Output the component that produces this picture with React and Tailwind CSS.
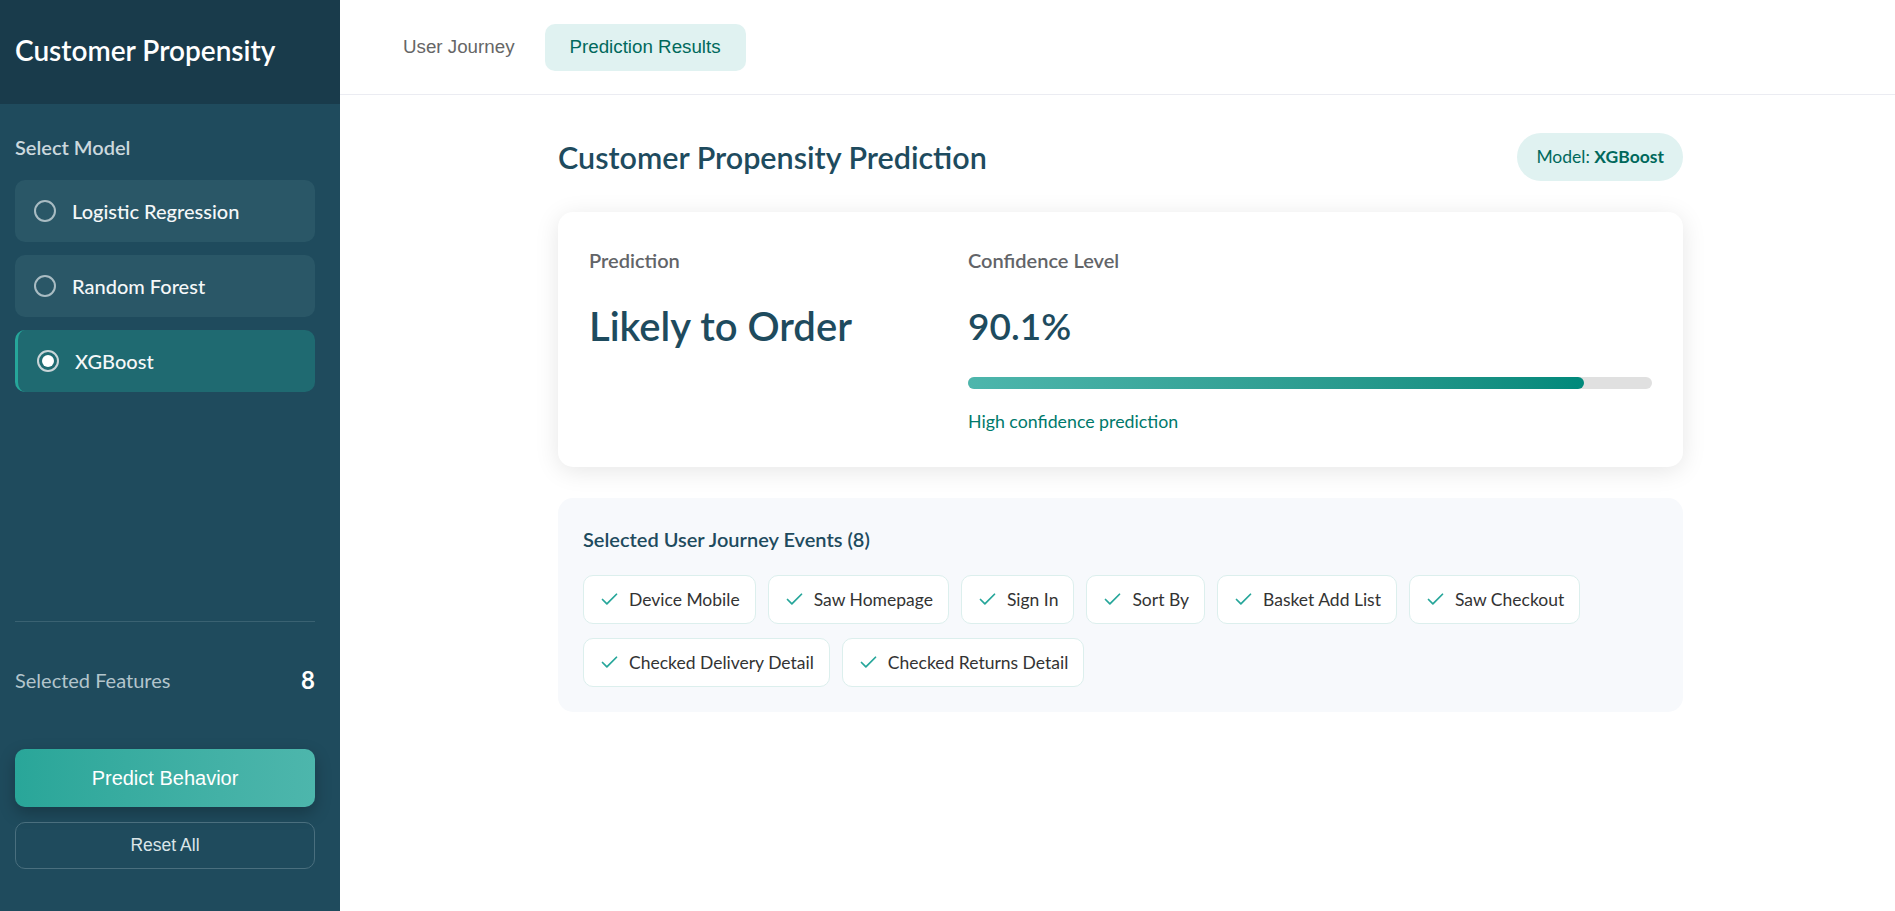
import { useState } from "react";
import { Check } from "lucide-react";

const MODELS = ["Logistic Regression", "Random Forest", "XGBoost"];

const EVENTS = [
  "Device Mobile",
  "Saw Homepage",
  "Sign In",
  "Sort By",
  "Basket Add List",
  "Saw Checkout",
  "Checked Delivery Detail",
  "Checked Returns Detail",
];

const sans = "font-['Lato','Open_Sans',sans-serif]";
const arial = "font-['Liberation_Sans',Arial,sans-serif]";

function ModelOption({ label, active, onSelect }) {
  return (
    <button
      onClick={onSelect}
      className={`flex h-[62px] w-full items-center gap-[16px] rounded-[10px] text-left ${
        active
          ? "border-l-[3px] border-[#26a69a] bg-[#1f6a71] pl-[19px]"
          : "bg-[#2a5767] pl-[19px]"
      }`}
    >
      <span
        className={`flex h-[22px] w-[22px] shrink-0 items-center justify-center rounded-full border-2 ${
          active ? "border-[#c9d5d8]" : "border-[#a9bcc3]"
        }`}
      >
        {active && <span className="h-[12px] w-[12px] rounded-full bg-white" />}
      </span>
      <span className="text-[20px] leading-[30px] font-medium text-[#f5f8f9]">{label}</span>
    </button>
  );
}

export default function App() {
  const [model, setModel] = useState("XGBoost");
  const [tab, setTab] = useState("results");
  const confidence = 90.1;

  return (
    <div className={`flex h-[911px] w-full overflow-hidden bg-white ${sans}`}>
      {/* sidebar */}
      <aside className="flex w-[340px] shrink-0 flex-col bg-[#1f4b5d]">
        <div className="h-[104px] bg-[#193b4b] px-[15px] pt-[32px]">
          <h1 className="text-[28px] leading-[36px] font-semibold text-white">Customer Propensity</h1>
        </div>

        <div className="flex flex-1 flex-col pl-[15px] pr-[25px]">
          <p className="mt-[28px] text-[20px] leading-[30px] font-semibold text-[#cbd8dd]">Select Model</p>
          <div className="mt-[18px] flex flex-col gap-[13px]">
            {MODELS.map((m) => (
              <ModelOption key={m} label={m} active={model === m} onSelect={() => setModel(m)} />
            ))}
          </div>

          <div className="mt-auto border-t border-[#3a6272] pb-[42px]">
            <div className="mt-[43px] flex items-center justify-between">
              <span className="text-[20px] leading-[30px] text-[#b3c5cc]">Selected Features</span>
              <span className="text-[24px] leading-[30px] font-bold text-white">8</span>
            </div>
            <button
              className={`mt-[54px] h-[58px] w-full rounded-[10px] bg-gradient-to-r from-[#29a699] to-[#4db6ac] text-[20px] text-white shadow-[0_6px_16px_rgba(0,0,0,0.25)] ${arial}`}
            >
              Predict Behavior
            </button>
            <button
              className={`mt-[15px] h-[47px] w-full rounded-[10px] border border-[#4a6f7e] text-[17.5px] text-[#dbe5e8] ${arial}`}
            >
              Reset All
            </button>
          </div>
        </div>
      </aside>

      {/* main */}
      <main className="flex min-w-0 flex-1 flex-col">
        <nav className={`flex h-[95px] shrink-0 items-center gap-[5px] border-b border-[#ebecf2] pl-[38px] ${arial}`}>
          <button
            onClick={() => setTab("journey")}
            className={`h-[47px] rounded-[10px] px-[25px] text-[18.75px] ${
              tab === "journey" ? "bg-[#e0f2f1] text-[#00695c]" : "text-[#666666]"
            }`}
          >
            User Journey
          </button>
          <button
            onClick={() => setTab("results")}
            className={`h-[47px] rounded-[10px] px-[25px] text-[18.75px] ${
              tab === "results" ? "bg-[#e0f2f1] text-[#00695c]" : "text-[#666666]"
            }`}
          >
            Prediction Results
          </button>
        </nav>

        <div className="flex justify-center pl-[6px] pt-[38px]">
          <div className="w-[1125px]">
            <header className="flex items-center justify-between">
              <h2 className="text-[30.5px] leading-[38px] font-semibold text-[#1e4b5e]">
                Customer Propensity Prediction
              </h2>
              <span className="flex h-[48px] items-center rounded-full bg-[#e0f2f1] px-[19px] text-[17.5px] text-[#00695c]">
                Model:&nbsp;<b className="font-bold">{model}</b>
              </span>
            </header>

            <section className="mt-[31px] grid grid-cols-[379px_1fr] rounded-[15px] bg-white px-[31px] pt-[33px] pb-[31px] shadow-[0_4px_24px_rgba(0,0,0,0.1)]">
              <div>
                <p className="text-[20px] leading-[30px] font-semibold text-[#626468]">Prediction</p>
                <p className="mt-[27px] text-[40px] leading-[48px] font-semibold text-[#1e4b5e]">Likely to Order</p>
              </div>
              <div>
                <p className="text-[20px] leading-[30px] font-semibold text-[#626468]">Confidence Level</p>
                <p className="mt-[27px] text-[37px] leading-[48px] font-semibold text-[#1e4b5e]">{confidence}%</p>
                <div className="mt-[27px] h-[12px] w-full rounded-full bg-[#e0e0e0]">
                  <div
                    className="h-full rounded-full bg-gradient-to-r from-[#4db6ac] to-[#00897b]"
                    style={{ width: `${confidence}%` }}
                  />
                </div>
                <p className="mt-[17px] text-[17.75px] leading-[30px] text-[#00796b]">High confidence prediction</p>
              </div>
            </section>

            <section className="mt-[31px] rounded-[15px] bg-[#f7f9fc] px-[25px] pt-[26px] pb-[25px]">
              <h3 className="text-[20px] leading-[30px] font-semibold text-[#1e4b5e]">
                Selected User Journey Events ({EVENTS.length})
              </h3>
              <div className="mt-[21px] flex flex-wrap gap-x-[12px] gap-y-[14px]">
                {EVENTS.map((e) => (
                  <div
                    key={e}
                    className="flex h-[49px] items-center gap-[9px] rounded-[10px] border border-[#dcefed] bg-white px-[15px]"
                  >
                    <Check size={21} strokeWidth={2} className="text-[#26a69a]" />
                    <span className="text-[17.5px] leading-[30px] text-[#333333]">{e}</span>
                  </div>
                ))}
              </div>
            </section>
          </div>
        </div>
      </main>
    </div>
  );
}
